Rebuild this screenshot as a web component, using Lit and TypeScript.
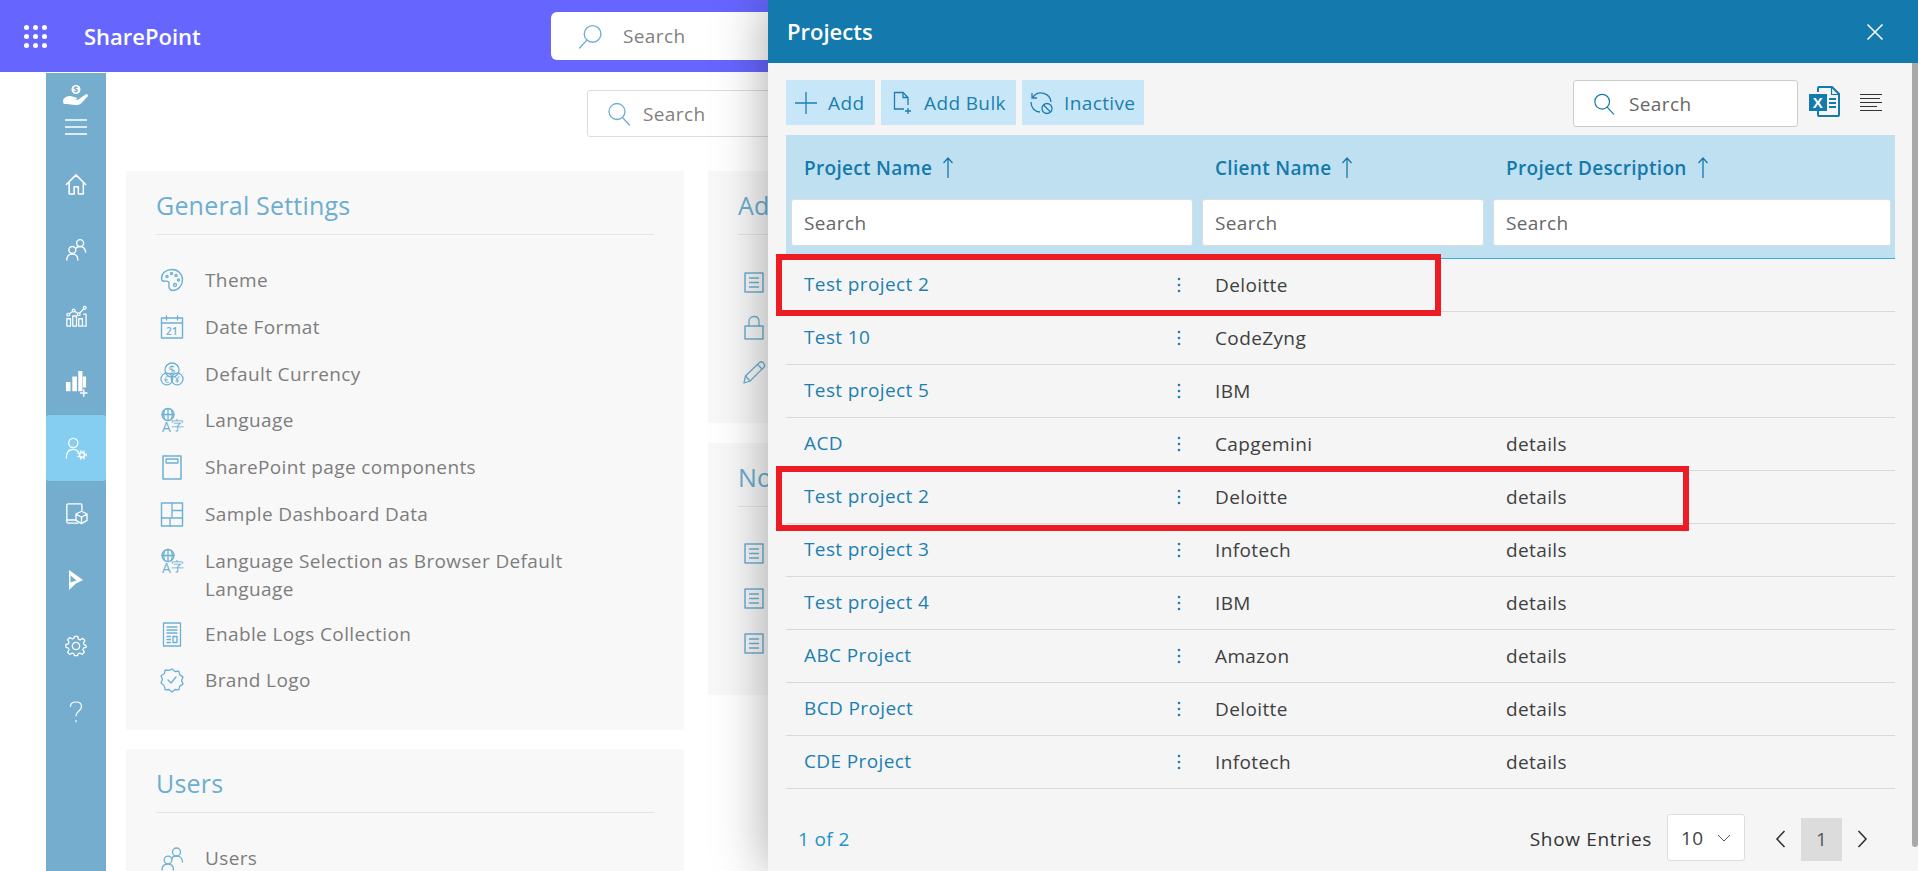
import { LitElement, html, css, svg } from "lit";
import { customElement } from "lit/decorators.js";

const ic = (body: unknown, size = 24, vb = "0 0 24 24") => html`<svg class="ic" width=${size} height=${size} viewBox=${vb} fill="none" stroke="currentColor" stroke-width="1.300" stroke-linecap="round" stroke-linejoin="round">${body}</svg>`;

const small = "font-family:'Open Sans',sans-serif;fill:currentColor;stroke:none";

const icons: Record<string, unknown> = {
  palette: svg`<path d="M12 1.500C6 1.500 1.500 5.300 1.500 10.500c0 3 2.600 2.800 4.700 2.600 2-.1 3.400 1.100 2.800 3.200-.7 2.500.5 6.200 3.800 6.200 5.400 0 9.700-5 9.700-10.800S18 1.500 12 1.500z" stroke-width="1.400"/><circle cx="7" cy="8.500" r="1.100"/><circle cx="11.500" cy="5.500" r="1.100"/><circle cx="16" cy="7.500" r="1.100"/><circle cx="18.500" cy="12" r="1.100"/><circle cx="15" cy="17" r="1.500"/>`,
  calendar: svg`<rect x="1.500" y="3" width="21" height="20" stroke-width="1.400"/><path d="M1.500 8h21M6.500 1v4M17.500 1v4"/><text x="12" y="20" text-anchor="middle" font-size="10" font-weight="600" style=${small}>21</text>`,
  currency: svg`<circle cx="12" cy="8" r="7"/><circle cx="6.800" cy="17" r="5.800"/><circle cx="17.200" cy="17" r="5.800"/><text x="12" y="12.500" text-anchor="middle" font-size="12" style=${small}>$</text><text x="6.800" y="20.500" text-anchor="middle" font-size="9" style=${small}>€</text><text x="17.200" y="20.500" text-anchor="middle" font-size="9" style=${small}>¥</text>`,
  language: svg`<circle cx="8" cy="6.500" r="6"/><path d="M2 6.500h12M8 .5v12M4.800 1.500c-1.300 3-1.300 7 0 10M11.200 1.500c1.300 3 1.300 7 0 10"/><text x="6.500" y="23.500" text-anchor="middle" font-size="14" style=${small}>A</text><text x="18" y="22" text-anchor="middle" font-size="12.500" style=${small}>字</text>`,
  page: svg`<rect x="3" y="1" width="18" height="23" stroke-width="1.500"/><rect x="6" y="4" width="12" height="4"/>`,
  dash: svg`<rect x="1.500" y="1" width="21" height="23" stroke-width="1.400"/><path d="M1.500 16h21M12 1v15M12 8.500h10.500M10 16v8"/>`,
  logs: svg`<rect x="3.500" y="1" width="17" height="23"/><path d="M7 5h10M7 8h10M7 11h10M7 14.500h3.500M7 17.500h3.500M7 20.500h3.500"/><rect x="13" y="14.500" width="4" height="6"/>`,
  brand: svg`<path d="M12 1.500l3 2.500 3.800-.3.900 3.700 3.300 2-1.400 3.600 1.400 3.600-3.300 2-.9 3.700-3.800-.3-3 2.500-3-2.500-3.800.3-.9-3.700L1 15.400l1.400-3.600L1 8.200l3.300-2 .9-3.700 3.800.3z" transform="translate(0 -.5)"/><path d="M8 12l3 3 5-6"/>`,
  users: svg`<circle cx="8" cy="14" r="3.800"/><path d="M2 24c0-4 2.500-6 6-6 3 0 5.500 2 5.500 6"/><circle cx="16.500" cy="6" r="4"/><path d="M12 13c0-1 .5-3 4.500-3 3.500 0 6 2.500 6 6"/>`,
  doc: svg`<rect x="3" y="3" width="18" height="19" stroke-width="1.500"/><path d="M7.500 8h9M7.500 12.500h9M7.500 17h9"/>`,
  lock: svg`<rect x="3" y="11" width="18" height="13" stroke-width="1.500"/><path d="M7 11V6.500C7 3.500 9 1.500 12 1.500s5 2 5 5V11"/>`,
  pencil: svg`<path d="M2 23l1.500-7L17.500 2.500c1-1 2.500-1 3.500 0l1 1.500c1 1 1 2 0 3.200L8 21z"/><path d="M3.500 16L8 21M15.500 4.500L20 9"/>`,
};

const S = 22;
const side: Record<string, unknown> = {
  hand: html`<svg class="ic" width="26" height="21" viewBox="0 0 26 21"><circle cx="13" cy="4.500" r="4.500" fill="#fff"/><text x="13" y="7.500" text-anchor="middle" font-size="8" font-weight="700" fill="#74add0" style="font-family:'Open Sans',sans-serif">$</text><path d="M.5 14c2.500-3 5.500-3.500 8-2.800l4.500 1.300c1.800.6 1.300 2.200-.5 2.200H9l5.500.3 8-5.500c2-1 3.300.3 2.300 1.800L18 18.500c-2 1.500-3.800 2-6.500 1.600L4 19H1C-.2 18 0 15.500.5 14z" fill="#fff"/></svg>`,
  menu: html`<svg class="ic" width="22" height="16" viewBox="0 0 22 16" stroke="#fff" stroke-width="1.500"><path d="M0 1h22M0 8h22M0 15h22"/></svg>`,
  home: ic(svg`<path d="M1.500 12.500L12 2l10.500 10.500M4.500 10v13H10v-8h4.500v8H20V10" stroke-width="1.700"/>`, S),
  users: ic(svg`<circle cx="8" cy="12" r="3.800" stroke-width="1.500"/><path d="M2 23c0-4 2.500-6.500 6-6.500s6 2.500 6 6.500" stroke-width="1.500"/><circle cx="16.500" cy="4.500" r="3.800" stroke-width="1.500"/><path d="M12.500 9.500c1-1 2.500-1.300 4-1.300 3.500 0 5.500 2.500 6 6" stroke-width="1.500"/>`, S),
  chart: ic(svg`<path d="M2 15h4v8H2zM8.500 12h4v11h-4zM15 15h4v8h-4zM20.500 10H23v13h-2.500" stroke-width="1.400"/><path d="M3.500 10.500L9.500 6l5.500 4 6.500-7"/><circle cx="3.500" cy="10.500" r="1.500" fill="#74add0"/><circle cx="9.500" cy="6" r="1.500" fill="#74add0"/><circle cx="15" cy="10" r="1.500" fill="#74add0"/><circle cx="21.500" cy="3" r="1.500" fill="#74add0"/>`, S),
  bars: ic(svg`<path d="M1 12h5v10H1zM8 6h5v16H8zM14.500 0H19v22h-4.500zM19.500 6H23v12h-3.500z" fill="#fff" stroke="none"/><path d="M17 24h7M20.500 20.500v7" stroke-width="1.500"/>`, S),
  person: ic(svg`<circle cx="9" cy="6.500" r="5" stroke-width="1.500"/><path d="M1.500 23c0-6 3-9.500 7.500-9.500 2.500 0 4.300 1 5.500 2.500" stroke-width="1.500"/><circle cx="18.500" cy="19.500" r="2.700" stroke-width="1.700"/><circle cx="18.500" cy="19.500" r="4.600" stroke-width="1.500" stroke-dasharray="1.600 2.200" stroke-linecap="butt"/>`, S),
  box: ic(svg`<path d="M14 22H3.500C2.500 22 2 21.500 2 20.500V2.500C2 1.500 2.500 1 3.500 1H17c1 0 1.500.5 1.500 1.500V8M2 18.500h10" stroke-width="1.500"/><path d="M18 9l6 3v7l-6 3.500-6-3.500v-7zM12 12l6 3.500 6-3.500M18 15.500v7" stroke-width="1.400"/>`, S),
  play: html`<svg class="ic" width="14" height="20" viewBox="0 0 14 20"><path d="M0 0l14 10-7 3.500L0 20z" fill="#fff"/><path d="M1.500 5.500L7.500 10.500 1.500 12.500z" fill="#74add0"/></svg>`,
  gear: ic(svg`<circle cx="12" cy="12" r="4" stroke-width="1.500"/><path d="M10 1h4l.8 3.300 2 .9L20 3.500 22.500 6l-1.700 3.100.9 2L24 12v2l-3 .8-.9 2 1.700 3L19.500 22.500l-3-1.700-2 .9L13.800 24h-3.600l-.8-2.300-2-.9-3 1.700L2 20l1.700-3-.9-2L0 14v-3.500l2.800-.5.9-2L2 5l2.500-2.500 3 1.700 2-.9z" stroke-width="1.500" transform="translate(1 .5) scale(.92)"/>`, S),
  help: html`<svg class="ic" width="14" height="22" viewBox="0 0 14 22" fill="none" stroke="#fff" stroke-width="1.200" stroke-linecap="round"><path d="M1.500 5.500C1.500 2.800 3.800 1 7 1s5.500 1.900 5.500 4.800c0 4-5.500 4.500-5.500 9"/><path d="M7 19.500v1.200"/></svg>`,
};

const settings: [string, string][] = [
  ["palette", "Theme"], ["calendar", "Date Format"], ["currency", "Default Currency"], ["language", "Language"],
  ["page", "SharePoint page components"], ["dash", "Sample Dashboard Data"],
  ["language", "Language Selection as Browser Default Language"], ["logs", "Enable Logs Collection"], ["brand", "Brand Logo"],
];
const rows: [string, string, string][] = [
  ["Test project 2", "Deloitte", ""], ["Test 10", "CodeZyng", ""], ["Test project 5", "IBM", ""], ["ACD", "Capgemini", "details"],
  ["Test project 2", "Deloitte", "details"], ["Test project 3", "Infotech", "details"], ["Test project 4", "IBM", "details"],
  ["ABC Project", "Amazon", "details"], ["BCD Project", "Deloitte", "details"], ["CDE Project", "Infotech", "details"],
];

const mag = (s = 24) => ic(svg`<circle cx="10" cy="9.500" r="8"/><path d="M15.500 15.500L22.500 23"/>`, s);

@customElement("app-root")
export class AppRoot extends LitElement {
  static styles = css`
    :host { display: block; position: relative; width: 1918px; height: 871px; overflow: hidden; background: #fff;
      font-family: "Open Sans", "Noto Sans", sans-serif; font-size: 19px; letter-spacing: .38px; color: #333; }
    * { box-sizing: border-box; }
    .ic { display: block; flex: none; overflow: visible; }
    .top { height: 72px; background: #6666ff; display: flex; align-items: center; color: #fff; }
    .waffle { margin-left: 24px; width: 23px; height: 23px; display: grid; grid-template-columns: repeat(3, 5px); gap: 4px; }
    .waffle i { width: 5px; height: 5px; border-radius: 50%; background: #fff; }
    .brand { margin-left: 37px; font-size: 22px; font-weight: 600; width: 467px; letter-spacing: 0; }
    .topsearch { width: 400px; height: 48px; background: #fff; border-radius: 6px; display: flex; align-items: center; padding-left: 27px; gap: 20px; color: #7f7f7f; }
    .topsearch svg { color: #6cadd0; transform: scaleX(-1); }
    .main { display: flex; height: 799px; }
    .side { margin: 1px 0 0 46px; width: 60px; background: #74adce; display: flex; flex-direction: column; align-items: center; color: #fff; flex: none; }
    .side .head { height: 78px; width: 100%; display: flex; flex-direction: column; align-items: center; padding-top: 12px; gap: 13px; }
    .side .it { height: 66px; width: 100%; display: flex; align-items: center; justify-content: center; }
    .side .it.on { background: #86cdf2; border-radius: 3px; }
    .content { flex: 1; padding: 18px 0 0 20px; min-width: 0; }
    .ssearch { margin-left: 461px; width: 400px; height: 47px; border: 1px solid #ddd; border-radius: 3px; display: flex; align-items: center; padding-left: 19px; gap: 12px; color: #7f7f7f; }
    .ssearch svg { color: #6cadd0; }
    .cols { margin-top: 34px; display: flex; gap: 24px; }
    .col { width: 558px; display: flex; flex-direction: column; gap: 19px; flex: none; }
    .col.b { gap: 20px; width: 70px; }
    .col.b .card { padding-right: 0; }
    .card { background: #f8f8f8; padding: 0 30px; }
    .card h2 { margin: 0; height: 64px; border-bottom: 1px solid #e5e5e5; font-size: 25px; font-weight: 400; letter-spacing: .2px; color: #6cadd0; line-height: 68px; white-space: nowrap; overflow: hidden; }
    .list { padding: 31px 0 0; display: flex; flex-direction: column; gap: 18.800px; }
    .row { display: flex; gap: 21px; padding-left: 4px; line-height: 28px; color: #7d7d7d; }
    .row .lbl { max-width: 400px; }
    .gen .row:nth-child(8) { margin-top: -2px; }
    .row .ico { color: #6cb0d3; }
    .row .ico svg { margin-top: 2px; }
    .gen { height: 559px; }
    .usr { height: 122px; }
    .adm { height: 252px; }
    .adm .list { padding-top: 33px; }
    .noti { height: 252px; }
    .noti .list { padding-top: 32px; }

    .panel { position: absolute; left: 768px; top: 0; width: 1150px; height: 871px; background: #f5f5f5; box-shadow: 0 0 50px rgba(0,0,0,.35); display: flex; flex-direction: column; }
    .phead { height: 63px; background: #1479ac; color: #fff; display: flex; align-items: center; justify-content: space-between; padding: 0 34px 0 19px; flex: none; }
    .phead b { font-size: 22px; font-weight: 600; letter-spacing: 0; margin-top: -1px; }
    .pbody { padding: 17px 23px 0 18px; }
    .tools { display: flex; align-items: flex-start; height: 55px; }
    .btn { height: 45px; background: #c7e6f7; color: #1c7fb0; display: flex; align-items: center; margin-right: 6px; flex: none; }
    .btn.a { width: 89px; padding-left: 9px; gap: 11px; }
    .btn.b { width: 135px; padding-left: 12px; gap: 13px; }
    .btn.c { width: 122px; padding-left: 8px; gap: 11px; }
    .psearch { margin-left: auto; margin-right: 11px; width: 225px; height: 47px; background: #fff; border: 1px solid #ccc; border-radius: 3px; display: flex; align-items: center; padding-left: 19px; gap: 14px; color: #666; }
    .psearch svg { color: #1479ac; }
    .xl { margin-right: 20px; margin-top: 6px; }
    .lines { margin-top: 14px; margin-right: 13px; }
    .thead { height: 124px; background: #bfe0f1; border-bottom: 1px solid #34ade8; }
    .g { display: grid; grid-template-columns: 412px 291px 1fr; }
    .labels { height: 64px; color: #1479ac; font-weight: 600; letter-spacing: .3px; }
    .labels span { padding: 19px 0 0 17px; display: flex; gap: 10px; line-height: 28px; }
    .labels span:first-child { padding-left: 18px; }
    .arrow { margin-top: 2px; }
    .filters > div { padding: 0 5px 0 4px; }
    .filters > div:first-child { padding-left: 5px; }
    .filters > div:last-child { padding-right: 4px; }
    .filters .inp { height: 47px; background: #fff; border: 1px solid #ddd; border-radius: 3px; padding-left: 12px; line-height: 46px; color: #666; }
    .tr { height: 53px; border-bottom: 1px solid #d9d9d9; align-items: center; }
    .tr > div { padding-left: 17px; position: relative; }
    .tr .n { color: #1c7fb0; padding: 0 0 3px 18px; }
    .tr .c, .tr .d { color: #404040; }
    .tr .dots { position: absolute; left: 391px; top: 6px; color: #1c7fb0; }
    .foot { display: flex; align-items: center; height: 100px; }
    .of { margin-left: 12px; color: #2491c9; }
    .se { margin-left: auto; font-weight: 500; color: #333; letter-spacing: .65px; }
    .sel { margin: 0 0 3px 15px; width: 78px; height: 47px; background: #fff; border: 1px solid #ddd; border-radius: 3px; display: flex; align-items: center; padding-left: 13px; gap: 13px; color: #444; }
    .pg { margin-left: 30px; margin-right: 27px; display: flex; align-items: center; gap: 15px; color: #333; }
    .pg .cur { width: 41px; height: 43px; background: #dcdcdc; display: flex; align-items: center; justify-content: center; color: #555; }
    .scroll { position: absolute; right: 0; top: 63px; width: 6px; height: 784px; background: #a9a9a9; border-radius: 0 0 3px 3px; }
    .mark { position: absolute; border: 6px solid #ed1c24; left: 8px; }
    .m1 { top: 254px; width: 665px; height: 62px; }
    .m2 { top: 466px; width: 913px; height: 65px; }
  `;

  private head(t: string) {
    return html`<span>${t}<svg class="arrow" width="12" height="24" viewBox="0 0 12 24" fill="none" stroke="currentColor" stroke-width="1.300"><path d="M6 22V2M1.500 7L6 2l4.500 5"/></svg></span>`;
  }

  render() {
    return html`
      <div class="top">
        <div class="waffle">${Array.from({ length: 9 }, () => html`<i></i>`)}</div>
        <div class="brand">SharePoint</div>
        <div class="topsearch">${mag(25)}<span>Search</span></div>
      </div>
      <div class="main">
        <nav class="side">
          <div class="head">${side.hand}${side.menu}</div>
          ${["home", "users", "chart", "bars", "person", "box", "play", "gear", "help"].map(
            (k) => html`<div class="it ${k === "person" ? "on" : ""}">${side[k]}</div>`)}
        </nav>
        <div class="content">
          <div class="ssearch">${mag(24)}<span>Search</span></div>
          <div class="cols">
            <div class="col">
              <section class="card gen"><h2>General Settings</h2>
                <div class="list">${settings.map(([i, t]) => html`<div class="row"><span class="ico">${ic(icons[i])}</span><span class="lbl">${t}</span></div>`)}</div>
              </section>
              <section class="card usr"><h2>Users</h2>
                <div class="list"><div class="row"><span class="ico">${ic(icons.users)}</span><span class="lbl">Users</span></div></div>
              </section>
            </div>
            <div class="col b">
              <section class="card adm"><h2>Administration</h2>
                <div class="list">${["doc", "lock", "pencil"].map((i) => html`<div class="row"><span class="ico">${ic(icons[i])}</span></div>`)}</div>
              </section>
              <section class="card noti"><h2>Notifications</h2>
                <div class="list">${[0, 1, 2].map(() => html`<div class="row"><span class="ico">${ic(icons.doc)}</span></div>`)}</div>
              </section>
            </div>
          </div>
        </div>
      </div>

      <aside class="panel">
        <div class="phead"><b>Projects</b>
          <svg width="18" height="18" viewBox="0 0 18 18" stroke="#fff" stroke-width="1.500"><path d="M1.500 1.500l15 15M16.500 1.500l-15 15"/></svg>
        </div>
        <div class="pbody">
          <div class="tools">
            <div class="btn a"><svg width="22" height="22" viewBox="0 0 22 22" stroke="currentColor" stroke-width="1.300"><path d="M11 0v22M0 11h22"/></svg><span>Add</span></div>
            <div class="btn b"><svg width="18" height="24" viewBox="0 0 18 24" fill="none" stroke="currentColor" stroke-width="1.300"><path d="M11 18H1.500V1.500H10l5 5V14M10 1.500v5h5M15 17v6M12 20h6"/></svg><span>Add Bulk</span></div>
            <div class="btn c"><svg width="23" height="24" viewBox="0 0 23 24" fill="none" stroke="currentColor" stroke-width="1.300"><path d="M3 6a10 10 0 0 1 18 5M1 11c0 6 4 10 9 10M2 2v5h5"/><circle cx="17" cy="17.500" r="5"/><path d="M13.500 14l7 7"/></svg><span>Inactive</span></div>
            <div class="psearch">${mag(22)}<span>Search</span></div>
            <svg class="xl" width="31" height="31" viewBox="0 0 31 31"><path d="M9 6V2a1 1 0 0 1 1-1h13l7 7v21a1 1 0 0 1-1 1H10a1 1 0 0 1-1-1v-4" fill="none" stroke="#1479ac" stroke-width="2"/><path d="M22.500 1v7.500H30" fill="none" stroke="#1479ac" stroke-width="1.200"/><path d="M20 13h7M20 17h7M20 21h7" stroke="#1479ac" stroke-width="2"/><rect x="0" y="8" width="18" height="17" fill="#1479ac"/><text x="9" y="21.500" text-anchor="middle" font-size="15" font-weight="700" fill="#fff" style="font-family:'Liberation Sans',sans-serif">X</text></svg>
            <svg class="lines" width="22" height="18" viewBox="0 0 22 18" stroke="#333" stroke-width="1"><path d="M0 .5h22M0 4.500h20M0 8.500h22M0 12.500h17M0 16.500h22"/></svg>
          </div>
          <div class="thead">
            <div class="g labels">${this.head("Project Name")}${this.head("Client Name")}${this.head("Project Description")}</div>
            <div class="g filters">
              <div><div class="inp">Search</div></div><div><div class="inp">Search</div></div><div><div class="inp">Search</div></div>
            </div>
          </div>
          ${rows.map(([n, c, d]) => html`<div class="g tr">
            <div class="n">${n}<svg class="dots" width="4" height="16" viewBox="0 0 4 16" fill="currentColor"><circle cx="2" cy="2" r="1.300"/><circle cx="2" cy="8" r="1.300"/><circle cx="2" cy="14" r="1.300"/></svg></div>
            <div class="c">${c}</div><div class="d">${d}</div></div>`)}
          <div class="foot">
            <span class="of">1 of 2</span>
            <span class="se">Show Entries</span>
            <div class="sel"><span>10</span><svg width="14" height="8" viewBox="0 0 14 8" fill="none" stroke="#555" stroke-width="1"><path d="M1 1l6 6 6-6"/></svg></div>
            <div class="pg">
              <svg width="11" height="18" viewBox="0 0 11 18" fill="none" stroke="currentColor" stroke-width="1.600"><path d="M9.500 1L2 9l7.500 8"/></svg>
              <div class="cur">1</div>
              <svg width="11" height="18" viewBox="0 0 11 18" fill="none" stroke="currentColor" stroke-width="1.600"><path d="M1.500 1L9 9l-7.500 8"/></svg>
            </div>
          </div>
        </div>
        <div class="scroll"></div>
        <div class="mark m1"></div>
        <div class="mark m2"></div>
      </aside>
    `;
  }
}
